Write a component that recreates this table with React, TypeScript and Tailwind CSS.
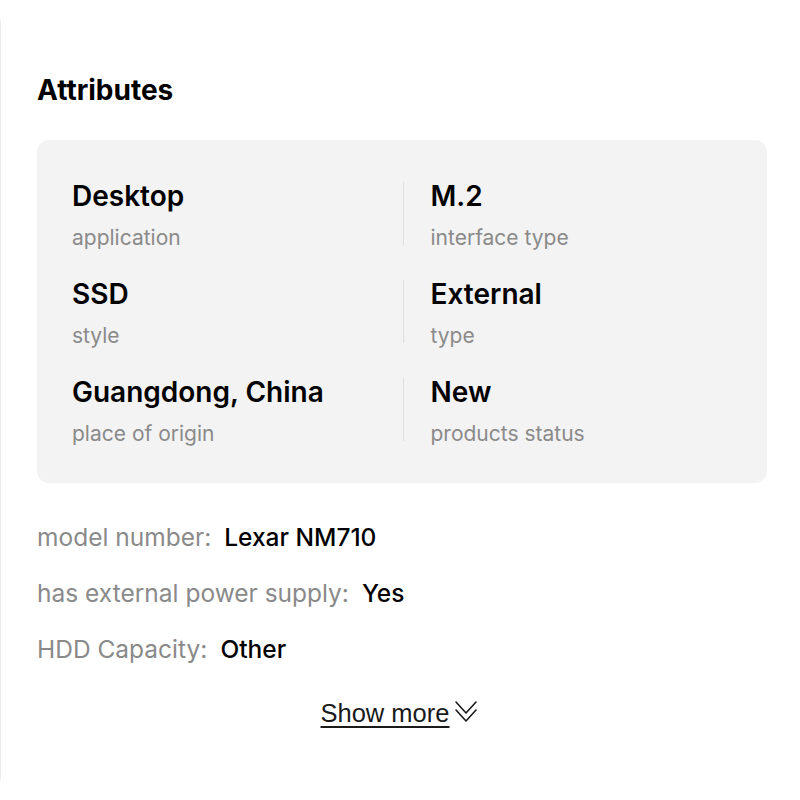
const ATTRS = [
  { value: "Desktop", label: "application" },
  { value: "M.2", label: "interface type" },
  { value: "SSD", label: "style" },
  { value: "External", label: "type" },
  { value: "Guangdong, China", label: "place of origin" },
  { value: "New", label: "products status" },
];

const EXTRA = [
  { label: "model number:", value: "Lexar NM710" },
  { label: "has external power supply:", value: "Yes" },
  { label: "HDD Capacity:", value: "Other" },
];

function DoubleChevron() {
  return (
    <svg width="24" height="26" viewBox="0 0 24 26" fill="none" stroke="#1a1a1a" strokeWidth="1.6" strokeLinecap="round" strokeLinejoin="round">
      <path d="M2 2 L12 13 L22 2" />
      <path d="M2 10 L12 21 L22 10" />
    </svg>
  );
}

export default function App() {
  return (
    <div className="bg-white w-[800px] h-[800px] pt-5 font-['Inter','Noto_Sans',sans-serif] text-black">
      <div className="h-[760px] border-l border-[#ececec] pl-9 pr-[33px] pt-[54px]">
        <h2 className="text-[28px] leading-8 font-bold">Attributes</h2>

        <div className="mt-[34px] rounded-xl bg-[#f3f3f3] pl-[35px] pr-9 pt-10 pb-[35px]">
          <div className="grid grid-cols-2 gap-y-[26px]">
            {ATTRS.map((a, i) =>
              i % 2 === 0 ? (
                <div key={a.value}>
                  <div className="text-[28px] leading-8 font-semibold">{a.value}</div>
                  <div className="mt-3 text-[21px] leading-7 text-[#8a8a8a]">{a.label}</div>
                </div>
              ) : (
                <div key={a.value} className="flex">
                  <div className="ml-[1px] mt-[2px] w-px h-[63px] bg-[#dedede]" />
                  <div className="ml-[27px]">
                    <div className="text-[28px] leading-8 font-semibold">{a.value}</div>
                    <div className="mt-3 text-[21px] leading-7 text-[#8a8a8a]">{a.label}</div>
                  </div>
                </div>
              )
            )}
          </div>
        </div>

        <div className="mt-10 flex flex-col gap-7">
          {EXTRA.map((e) => (
            <div key={e.label} className="flex text-[24.5px] leading-7">
              <span className="text-[#8a8a8a]">{e.label}</span>
              <span className="ml-[13px] font-medium">{e.value}</span>
            </div>
          ))}
        </div>

        <div className="mt-[34px] flex justify-center">
          <button className="mr-[5px] flex items-center gap-[5px] text-[25.5px] leading-8 text-[#1a1a1a] font-['Liberation_Sans',Arial,sans-serif]">
            <span className="underline underline-offset-4 decoration-[1.5px]">Show more</span>
            <DoubleChevron />
          </button>
        </div>
      </div>
    </div>
  );
}
